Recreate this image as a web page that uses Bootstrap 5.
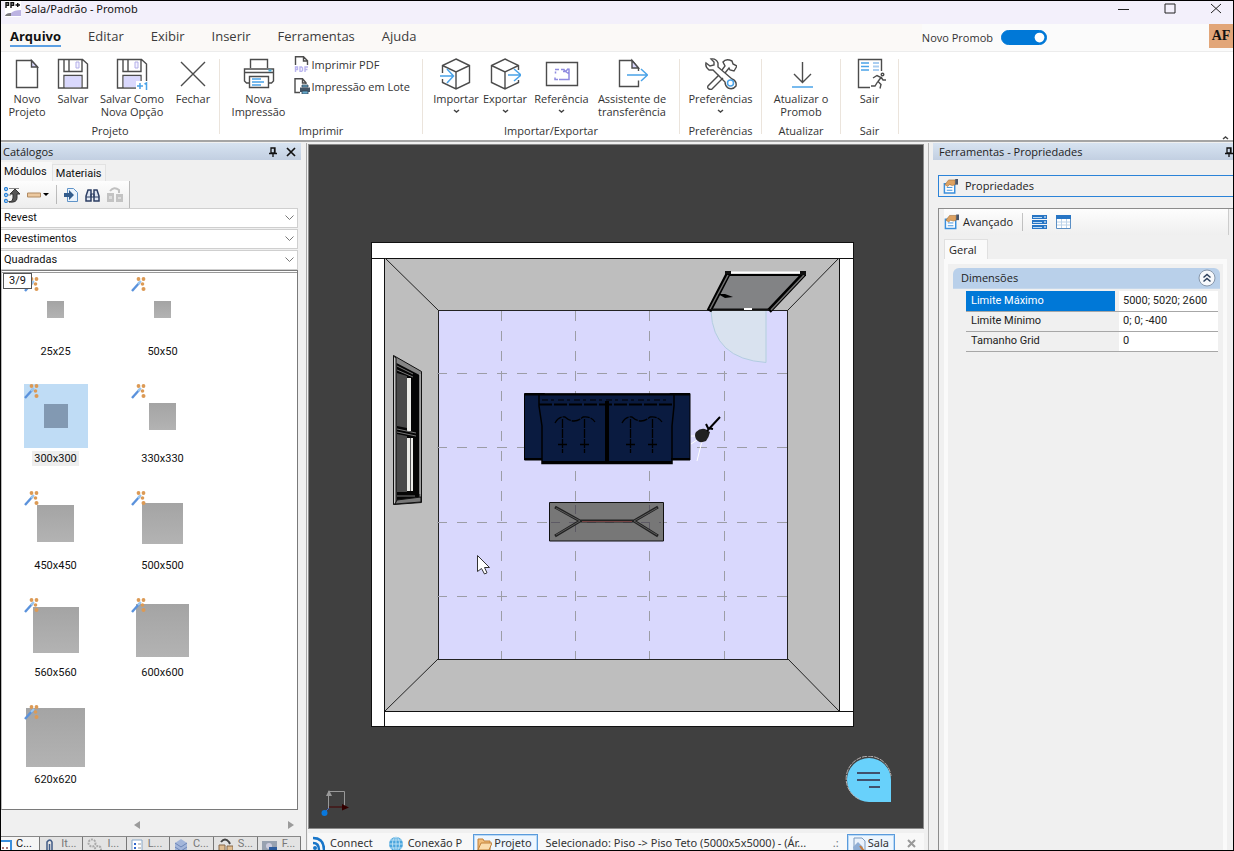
<!DOCTYPE html>
<html lang="pt-BR">
<head>
<meta charset="utf-8">
<meta name="viewport" content="width=device-width, initial-scale=1">
<title>Sala/Padrão - Promob</title>
<link rel="stylesheet" href="https://cdn.jsdelivr.net/npm/bootstrap@5.3.0/dist/css/bootstrap.min.css">
<script src="https://cdn.jsdelivr.net/npm/bootstrap@5.3.0/dist/js/bootstrap.bundle.min.js"></script>
<style>
  :root { --ui: "Open Sans", "Noto Sans", sans-serif; --noto: "Noto Sans", "Open Sans", sans-serif; --cls: Roboto, "Liberation Sans", sans-serif; }
  html, body { height: 100%; }
  body { font-family: var(--ui); font-size: 12px; line-height: 16px; color: #333; background: #f0f0f0; border: 1px solid #000; }
  button { color: inherit; }
  svg { display: block; flex: none; }
  .s { fill: none; stroke: #4c4c4c; stroke-width: 1.4; }
  .b { fill: none; stroke: #4aa3e8; stroke-width: 1.5; }
  .lv { fill: #d9d8fd; }

  .title-bar { height: 23px; background: #f3f0fb; color: #111; }
  .title-bar .caption { line-height: 16px; font-family: var(--noto); font-size: 11px; }
  .win-btns { gap: 34px; padding: 2px 11px 0 0; }
  .win-btns button { height: 12px; }
  .menu-bar { height: 28px; background: #fbf9f7; border-bottom: 1px solid #ececec; }
  .menu-tabs { padding-left: 9px; gap: 27px; }
  .menu-tabs a { font-size: 13px; line-height: 24px; color: #3b3b3b; text-decoration: none; height: 24px; }
  .menu-tabs a.active { font-weight: 700; color: #111; border-bottom: 2px solid #5b9fe3; height: 23px; }
  .menu-right { background: #fbfbfb; font-size: 11px; }
  .menu-right .form-switch { padding: 0; min-height: 0; margin: 0; gap: 8px; }
  .menu-right .form-check-input { width: 46px; height: 15px; margin: 0; float: none; background-color: #0078d7 !important; border-color: #0078d7; }
  .user-tag { width: 24px; height: 24px; margin-left: 162px; background: #e2a679; color: #111; font: 700 14px/23px "Liberation Serif", serif; text-align: center; }

  .ribbon { background: #fff; height: 90px; border-bottom: 2px solid #a5a5a5; font-size: 11px; line-height: 13px; padding-top: 7px; }
  .r-group { height: 75px; border-right: 1px solid #ebe4dc; }
  .r-tools { height: 65px; display: grid; justify-content: center; align-items: start; }
  .r-name { text-align: center; line-height: 14px; }
  .r-btn { border: 0; background: none; padding: 0; display: flex; flex-direction: column; align-items: center; line-height: 13px; white-space: nowrap; }
  .r-btn svg { margin-bottom: 2px; margin-top: -1px; }
  .r-btn .chev { margin: 4px 0 0; }
  .g-proj { width: 219px; } .g-proj .r-tools { grid-template-columns: 48px 44px 74px 48px; }
  .g-prn { width: 203px; } .g-prn .r-tools { grid-template-columns: 70px 125px; }
  .g-io { width: 257px; } .g-io .r-tools { grid-template-columns: 49px 49px 64px 77px; }
  .g-pref { width: 82px; } .g-upd { width: 79px; } .g-exit { width: 58px; }
  .r-line { border: 0; background: none; padding: 0; display: flex; align-items: center; gap: 2px; height: 22px; white-space: nowrap; }
  .r-list { margin-top: -6px; }

  .left-pane { width: 300px; font-family: var(--cls); font-size: 11px; color: #111; }
  .pane-head { height: 17px; line-height: 17px; background: linear-gradient(#d7e3f1, #c2cfe1); color: #222; font-family: var(--ui); font-size: 11px; padding: 0 4px 0 2px; }
  .pane-tabs { height: 19px; margin-top: 2px; }
  .pane-tabs button { border: 0; padding: 0 5px 0 3px; background: #f8f8f8; line-height: 17px; font-size: 11px; }
  .pane-tabs button + button { border: 1px solid #e2e2e2; border-bottom: 0; background: #f3f3f3; margin-top: 2px; padding: 0 3px; }
  .tool-strip { height: 27px; width: 129px; background: linear-gradient(#fdfdfd, #ededed); border-right: 1px solid #b9b9b9; padding-left: 3px; gap: 7px; }
  .tool-strip button, .mini { border: 0; background: none; padding: 0; }
  .ruler { gap: 2px; }
  .combo { height: 20px; padding: 0 4px 0 3px; font-size: 11px; line-height: 18px; border: 1px solid #cfcfcf; border-left: 0; border-radius: 0; color: #111;
    background: #fff url("data:image/svg+xml,%3Csvg xmlns='http://www.w3.org/2000/svg' viewBox='0 0 9 6'%3E%3Cpath fill='none' stroke='%23777' d='M.5.5l4 4 4-4'/%3E%3C/svg%3E") no-repeat right 3px center / 9px 6px; }
  .combos { gap: 1px; }
  .combos, .tile-box, .h-scroll { margin-right: 3px; }
  .tile-box { background: #fff; border: 1px solid #7a7a7a; border-left-color: #bbb; box-shadow: inset 0 2px 0 -1px #fff, inset 0 3px 0 -1px #999; height: 540px; position: relative; padding-top: 6px; }
  .tiles { display: grid; grid-template-columns: repeat(auto-fill, 107px); }
  .tile { height: 107px; border: 0; background: none; padding: 0; display: flex; flex-direction: column; align-items: center; }
  .thumb { width: 64px; height: 64px; margin: 0 0 3px; position: relative; display: flex; align-items: center; justify-content: center; }
  .thumb i { aspect-ratio: 1; background: linear-gradient(#a4a4a4, #b3b3b3); }
  .thumb svg { position: absolute; left: 0; top: 0; }
  .tile .cap { line-height: 15px; padding: 0 2px; font-size: 11px; }
  .tile.on .thumb { background: #bfdcf5; } .tile.on .thumb i { background: #8299b2; } .tile.on .cap { background: #eee; }
  .counter { position: absolute; left: 1px; top: 2px; border: 1px solid #555; background: #fff; line-height: 14px; padding: 0 5px; z-index: 1; font-size: 11px; }
  .h-scroll { height: 26px; padding: 6px 3px 0 132px; }
  .dock-tabs { border-top: 1px solid #888; }
  .dock-tabs button { border: 0; border-right: 1px solid #777; background: #e3e3e3; color: #777; width: 44px; padding: 0 4px; gap: 5px; line-height: 14px; font-size: 11px; }
  .dock-tabs svg { height: 14px; }
  .dock-tabs button.on { background: #f5f5f5; color: #111; width: 40px; padding-left: 0; gap: 4px; }

  .main-row { min-height: 0; padding-top: 1px; }
  .mid-pane { border-left: 1px solid #a8a8a8; border-right: 1px solid #b4b4b4; margin-left: 5px; padding: 1px 4px 0 1px; }
  .scene { background: #404040; height: 685px; border: 1px solid #8a8a8a; position: relative; }
  .scene svg.plan { width: 100%; height: 100%; }
  .chat { position: absolute; right: 30px; bottom: 24px; }
  .status { margin-top: 4px; background: #f8f8f8; color: #333; line-height: 17px; white-space: nowrap; font-family: var(--noto); font-size: 11px; padding-top: 1px; }
  .status button { border: 0; background: none; padding: 0; display: flex; gap: 5px; line-height: 17px; }
  .status svg { height: 16px; }
  .status .proj { margin-left: 11px; }
  .status .on { border: 1px solid #5a9bdc; border-bottom: 0; box-shadow: inset 0 0 0 1px #b9d9f6; background: #eef6fe; padding: 0 5px 0 3px; gap: 2px; line-height: 16px; }

  .right-pane { font-size: 11px; width: 300px; overflow: hidden; color: #222; }
  .right-pane .pane-head { padding: 0 0 0 6px; }
  .prop-btn { height: 24px; border: 1px solid #2b83d8; border-right: 0; margin: 15px 0 0 5px; background: #f1f1f1; padding: 0 4px; gap: 7px; line-height: 20px; text-align: left; }
  .prop-box { margin: 11px 0 0 5px; border: 1px solid #8c8c8c; border-width: 1px 0 0 1px; padding-left: 5px; flex: 1; }
  .prop-tools { height: 26px; background: linear-gradient(#fdfdfd, #efefef); gap: 9px; margin-right: 4px; border-right: 1px solid #ccc; }
  .geral { border: 1px solid #e0e0e0; border-bottom: 0; background: #fafafa; height: 20px; line-height: 19px; margin-top: 4px; padding: 0 10px 0 4px; }
  .geral-page { background: #fafafa; padding: 5px 4px 0; margin-right: 6px; }
  .sheet { background: #f0f0f0; padding: 4px 3px 0 5px; height: 620px; }
  .sec-head { height: 21px; line-height: 20px; background: #b9d0ea; border-radius: 6px 6px 0 0; padding: 0 4px 0 8px; border-bottom: 1px solid #c6d8ec; }
  .props { margin: 2px 0 0 13px; width: calc(100% - 15px); font-family: var(--cls); }
  .props th, .props td { height: 20px; padding: 0 0 0 5px; border-bottom: 1px solid #a7a7a7; font-weight: 400; line-height: 18px; }
  .props th { width: 153px; } .props td { background: #fff; padding-left: 4px; }
  .props tr.on th { background: linear-gradient(#0078d7, #0078d7) 0 0 / 149px 100% no-repeat; color: #fff; }
</style>
</head>
<body class="d-flex flex-column overflow-hidden">

<svg width="0" height="0" class="position-absolute" aria-hidden="true">
  <symbol id="wand" viewBox="0 0 15 15"><path d="M1 14 9 5" stroke="#5a92dc" stroke-width="2.4"/><path d="M7 7l3-3" stroke="#9cc8f0" stroke-width="2"/><g fill="#dc9a55"><circle cx="7.500" cy="2" r="1.900"/><circle cx="12.500" cy="2" r="1.900"/><circle cx="11.500" cy="7" r="1.800"/><circle cx="12.500" cy="12" r="2"/></g></symbol>
  <symbol id="pin" viewBox="0 0 8 10"><path d="M2 1h4v5H2zM5.500 1v5M0 6.500h8M4 7v3" fill="none" stroke="#111" stroke-width="1.300"/></symbol>
  <symbol id="chev" viewBox="0 0 7 5"><path d="M1 1l2.500 2L6 1" fill="none" stroke="#444" stroke-width="1.500"/></symbol>
  <symbol id="floppy" viewBox="0 0 32 32"><path class="s" d="M1.500 1.500h24l5 4.500v24h-29zM7 1.500v12h18v-12M7 30V17.500h18V30M12 2v11"/><path class="lv" d="M7.700 18.200h16.600v11H7.700z"/><path d="M19 4h3v6h-3z" fill="#f4f3ff" stroke="#b2aee8"/></symbol>
  <symbol id="cube" viewBox="0 0 32 32"><path class="s" d="M16 1l13.500 6.500v17L16 31 2.500 24.500v-17zM2.500 7.500 16 14l13.500-6.500M16 14v17"/></symbol>
  <symbol id="hand" viewBox="0 0 16 16"><path d="M1.500 5h11v10h-11z" fill="#fff" stroke="#3a8fdc" stroke-width="1.600"/><path d="M4 9h6M4 12h6" stroke="#3a8fdc"/><path d="M2 6l4-5h7v5l-3 1-3-1-2 2z" fill="#dda262" stroke="#9c6b35" stroke-width=".6"/><path d="M13 0h3v6h-3z" fill="#4a5568"/></symbol>
</svg>

<header>
  <div class="title-bar d-flex justify-content-between">
    <div class="d-flex">
      <svg width="16" height="16" viewBox="0 0 16 16" class="ms-1 me-1"><path fill="#fff" d="M0 0h16v16H0z"/><path d="M1 1v6M1 1.700h2.500v2.600H1M6 1v6M6 1.700h2.500v2.600H6M10.500 4H15M12.700 2v4" fill="none" stroke="#111" stroke-width="1.400"/><path d="M0 15q1-3 6-3 3-3 10-3v6z" fill="#bcb3e2"/><path d="M0 15q1-3 6-3v3z" fill="#777"/></svg>
      <span class="caption">Sala/Padrão - Promob</span>
    </div>
    <div class="d-flex win-btns">
      <button class="mini" aria-label="Minimizar"><svg width="12" height="12"><path d="M0 6.500h11" stroke="#222" /></svg></button>
      <button class="mini" aria-label="Maximizar"><svg width="12" height="12"><path d="M1 1h10v9H1z" fill="none" stroke="#222" /></svg></button>
      <button class="mini" aria-label="Fechar janela"><svg width="12" height="12"><path d="M1 1l10 9M11 1 1 10" stroke="#222" /></svg></button>
    </div>
  </div>

  <div class="menu-bar d-flex justify-content-between">
    <nav class="menu-tabs d-flex">
      <a href="#" class="active">Arquivo</a><a href="#">Editar</a><a href="#">Exibir</a><a href="#">Inserir</a><a href="#">Ferramentas</a><a href="#">Ajuda</a>
    </nav>
    <div class="menu-right d-flex">
      <div class="form-check form-switch d-flex align-items-center">
        <label for="novo">Novo Promob</label>
        <input class="form-check-input" type="checkbox" role="switch" id="novo" checked>
      </div>
      <div class="user-tag">AF</div>
    </div>
  </div>

  <div class="ribbon d-flex position-relative">
    <section class="r-group g-proj">
      <div class="r-tools">
        <button class="r-btn"><svg width="32" height="32"><path class="s" d="M5.500 2.500h15l6 6.500v20.500h-21z"/><path class="s" d="M20.500 2.500V9h6z" style="fill:#d9d8fd"/></svg><span>Novo<br>Projeto</span></button>
        <button class="r-btn"><svg width="32" height="32"><use href="#floppy"/></svg>Salvar</button>
        <button class="r-btn"><svg width="32" height="32"><use href="#floppy"/><path d="M20 23h12v9H20z" fill="#fff"/><path class="b" d="M21 28h6M24 25v6M28.500 26l2-1v7"/></svg><span>Salvar Como<br>Nova Opção</span></button>
        <button class="r-btn"><svg width="32" height="32"><path class="s" d="M4 4l24 24M28 4 4 28"/></svg>Fechar</button>
      </div>
      <div class="r-name">Projeto</div>
    </section>
    <section class="r-group g-prn">
      <div class="r-tools">
        <button class="r-btn"><svg width="32" height="32"><path class="s" d="M7.500 10V1.500h17V10M6.500 25H3.500L1.500 23V11h29v12l-2 2h-3M1.500 14.500h29M6.500 18.500h19v11h-19z"/><path class="b" d="M9 21h9M9 24h12M9 27h9"/><path d="M25.500 12.500h3" stroke="#4ad" stroke-width="2"/></svg><span>Nova<br>Impressão</span></button>
        <div class="r-list">
          <button class="r-line"><svg width="16" height="16"><path class="s" d="M1.500 9V.7h8l4 4V9M9.500 1v4h4"/><path d="M1.500 16v-5h2v2.500h-2M6 15.500v-4.500h1.500l1 1v2.500l-1 1zM11 16v-5h3M11 13.500h2.500" fill="none" stroke="#b8b3ef" stroke-width="1.400"/></svg>Imprimir PDF</button>
          <button class="r-line"><svg width="16" height="16"><path class="s" d="M6 14.500H1V.7h7.500l3.500 4V6M8.500 1v4H12"/><path d="M6 9.500h10v4.500H6z" fill="#456"/><path d="M8 7h6v2H8zM8 13h6v3H8z" fill="#6ac" stroke="#345" stroke-width=".8"/></svg>Impressão em Lote</button>
        </div>
      </div>
      <div class="r-name">Imprimir</div>
    </section>
    <section class="r-group g-io">
      <div class="r-tools">
        <button class="r-btn"><svg width="32" height="32"><use href="#cube"/><path d="M0 15h6v6H0z" fill="#fff"/><path class="b" d="M-1 18h14M7 11l6.500 7L7 25"/></svg>Importar<svg class="chev" width="7" height="5"><use href="#chev"/></svg></button>
        <button class="r-btn"><svg width="32" height="32"><use href="#cube"/><path d="M26 12h6v10h-6z" fill="#fff"/><path class="b" d="M19 17h13M25 11l7 6-7 6"/></svg>Exportar<svg class="chev" width="7" height="5"><use href="#chev"/></svg></button>
        <button class="r-btn"><svg width="34" height="32"><path class="s" d="M1.500 4.500h31v23h-31z"/><path d="M10 11.500h4m2 0h3l1 2h-2M24 10.500v11h-10m-4-2v2h3M10.500 13.500v2m13-5-3 3 3 2" fill="none" stroke="#8f8be0" stroke-width="1.500"/></svg>Referência<svg class="chev" width="7" height="5"><use href="#chev"/></svg></button>
        <button class="r-btn"><svg width="32" height="32"><path class="s" d="M22.500 13V10L16 2.500H3.500v26h19v-6"/><path class="s" d="M16 2.500V10h6.500z" style="fill:#d9d8fd"/><path class="b" d="M11 17h20M25 11l6.500 6-6.500 6"/></svg><span>Assistente de<br>transferência</span></button>
      </div>
      <div class="r-name">Importar/Exportar</div>
    </section>
    <section class="r-group g-pref">
      <div class="r-tools">
        <button class="r-btn"><svg width="32" height="32"><path class="s" d="M6 1q5-1 7 4v4L27 21q5 2 4 7-3 4-8 2-3-2-3-6L8 12H4Q0 9 1 5l4 3 4-1V4z"/><path class="s" d="M17 12l3-4-2-4q3-4 9-1l1 3 4 2-3 5-4-1-1-2-4 5M14 17 3 28q-1 2 1 3t3 0l11-11"/><circle class="b" cx="25.500" cy="25" r="3"/></svg>Preferências<svg class="chev" width="7" height="5"><use href="#chev"/></svg></button>
      </div>
      <div class="r-name">Preferências</div>
    </section>
    <section class="r-group g-upd">
      <div class="r-tools">
        <button class="r-btn"><svg width="32" height="32"><path class="s" d="M17.500 4v20M9 16l8.500 8.500L26 16"/><path class="b" d="M7 29h21"/></svg><span>Atualizar o<br>Promob</span></button>
      </div>
      <div class="r-name">Atualizar</div>
    </section>
    <section class="r-group g-exit">
      <div class="r-tools">
        <button class="r-btn"><svg width="32" height="32"><path class="s" d="M27.500 13V1.500h-23v28H16"/><path class="b" d="M7 5h8M7 8.500h8M7 12h8" stroke-width="2"/><path d="M19 5h6M19 8.500h6M19 12h6" stroke="#a9cdf0" stroke-width="2"/><path class="s" d="M19 20l4-2.500 4 2-3 4 3 3-1 4M23.500 24l-2.500 4h-4M27 19l2 3h3"/><circle class="s" cx="28.500" cy="16.500" r="1.300"/></svg>Sair</button>
      </div>
      <div class="r-name">Sair</div>
    </section>
    <button class="mini position-absolute bottom-0 end-0 me-1" aria-label="Recolher faixa"><svg width="7" height="5"><path d="M1 4l2.500-2L6 4" fill="none" stroke="#444" stroke-width="1.500"/></svg></button>
  </div>
</header>

<main class="main-row d-flex flex-grow-1">
  <aside class="left-pane flex-shrink-0">
    <div class="pane-head d-flex align-items-center">
      <span class="me-auto">Catálogos</span>
      <button class="mini me-2" aria-label="Fixar"><svg width="8" height="10"><use href="#pin"/></svg></button>
      <button class="mini" aria-label="Fechar painel"><svg width="12" height="10"><path d="M2 1l8 8M10 1 2 9" stroke="#111" stroke-width="1.700"/></svg></button>
    </div>
    <div class="pane-tabs d-flex"><button>Módulos</button><button>Materiais</button></div>
    <div class="tool-strip d-flex align-items-center">
      <button aria-label="Subir nível"><svg width="16" height="16"><g fill="#fff" stroke="#2b83d8" stroke-width="1.300"><circle cx="2" cy="2" r="1.500"/><circle cx="2" cy="8" r="1.500"/><circle cx="2" cy="14" r="1.500"/></g><path d="M5 1.500h10M3 14.500h4M4 8h3" stroke="#888"/><path d="M5 15q4 0 4-4V7H6l5-5 5 5h-3v4q0 5-8 4z" fill="#555" stroke="#333"/></svg></button>
      <button class="ruler d-flex align-items-center" aria-label="Régua"><svg width="14" height="6"><path d="M.5 1h13v4H.5z" fill="#ecc9a0" stroke="#b08a62"/></svg><svg width="6" height="4"><path d="M0 0h6L3 3z"/></svg></button>
      <span class="vr mt-1 mb-1"></span>
      <button aria-label="Inserir"><svg width="14" height="14"><path d="M3.500.5h6l4 4v9h-10z" fill="#eaf3fc" stroke="#5f93c8"/><path d="M0 5h5V2l5 5-5 5V9H0z" fill="#335c8c"/></svg></button>
      <button aria-label="Localizar"><svg width="15" height="14"><path d="M1 13V8l2-6h3v11zM14 13V8l-2-6H9v11z" fill="#dfe6f2" stroke="#2d3e63" stroke-width="1.500"/><path d="M6 6h3v3H6zM1 9h5M9 9h5" stroke="#2d3e63" fill="none"/></svg></button>
      <button aria-label="Substituir" disabled><svg width="16" height="16"><path d="M0 6h7v9H0zM9 7h7v8H9z" fill="#c3c3c3"/><path d="M2 9h3v3H2zM11 10h3v2h-3z" fill="#ddd"/><path d="M3 4q4-5 9-1v3" fill="none" stroke="#c0c0c0" stroke-width="2"/></svg></button>
    </div>
    <div class="combos d-flex flex-column">
      <select class="combo form-select" aria-label="Catálogo"><option>Revest</option></select>
      <select class="combo form-select" aria-label="Grupo"><option>Revestimentos</option></select>
      <select class="combo form-select" aria-label="Tipo"><option>Quadradas</option></select>
    </div>
    <div class="tile-box">
      <div class="counter">3/9</div>
      <div class="tiles">
        <button class="tile"><span class="thumb"><svg width="15" height="15"><use href="#wand"/></svg><i style="width:17px"></i></span><span class="cap">25x25</span></button>
        <button class="tile"><span class="thumb"><svg width="15" height="15"><use href="#wand"/></svg><i style="width:17px"></i></span><span class="cap">50x50</span></button>
        <button class="tile on"><span class="thumb"><svg width="15" height="15"><use href="#wand"/></svg><i style="width:24px"></i></span><span class="cap">300x300</span></button>
        <button class="tile"><span class="thumb"><svg width="15" height="15"><use href="#wand"/></svg><i style="width:27px"></i></span><span class="cap">330x330</span></button>
        <button class="tile"><span class="thumb"><svg width="15" height="15"><use href="#wand"/></svg><i style="width:37px"></i></span><span class="cap">450x450</span></button>
        <button class="tile"><span class="thumb"><svg width="15" height="15"><use href="#wand"/></svg><i style="width:41px"></i></span><span class="cap">500x500</span></button>
        <button class="tile"><span class="thumb"><svg width="15" height="15"><use href="#wand"/></svg><i style="width:46px"></i></span><span class="cap">560x560</span></button>
        <button class="tile"><span class="thumb"><svg width="15" height="15"><use href="#wand"/></svg><i style="width:53px"></i></span><span class="cap">600x600</span></button>
        <button class="tile"><span class="thumb"><svg width="15" height="15"><use href="#wand"/></svg><i style="width:59px"></i></span><span class="cap">620x620</span></button>
      </div>
    </div>
    <div class="h-scroll d-flex justify-content-between">
      <svg width="8" height="18"><path d="M7 5v8L1 9z" fill="#9b9b9b"/></svg><svg width="8" height="18"><path d="M1 5v8l6-4z" fill="#9b9b9b"/></svg>
    </div>
    <div class="dock-tabs d-flex">
      <button class="on d-flex"><svg width="11" height="16"><path d="M-2 4h12v12H-2z" fill="#fff" stroke="#3a8fdc" stroke-width="2"/><path d="M1 11h2M5 11h2" stroke="#a77" stroke-width="2"/></svg>C...</button>
      <button class="d-flex"><svg width="12" height="16"><path d="M3 16V5q3-4 5 0v11M5.500 7v9" fill="none" stroke="#405b86" stroke-width="1.500"/></svg>It...</button>
      <button class="d-flex"><svg width="15" height="16"><circle cx="5" cy="6" r="3.500" fill="none" stroke="#aaa" stroke-width="2" stroke-dasharray="2 1"/><circle cx="11" cy="12" r="3" fill="none" stroke="#aaa" stroke-width="2" stroke-dasharray="2 1"/></svg>I...</button>
      <button class="d-flex"><svg width="12" height="16"><path d="M1 3h10v14H1z" fill="#fff" stroke="#89a8c9"/><path d="M3 7h2M3 11h2" stroke="#36c" stroke-width="2"/><path d="M7 7h3M7 11h3" stroke="#999"/></svg>L...</button>
      <button class="d-flex"><svg width="14" height="16"><path d="M7 2l6 4v7l-6 4-6-4V6z" fill="#a3b6da"/><path d="M1 6l6 4 6-4M1 10l6 4 6-4" stroke="#6e87b8" fill="none"/></svg>C...</button>
      <button class="d-flex"><svg width="15" height="16"><path d="M1 8h6v8H1zM9 9h6v7H9z" fill="#e0bd91" stroke="#86684a"/><path d="M3 5q4-5 8 0l1 2" fill="none" stroke="#444" stroke-width="2"/></svg>S...</button>
      <button class="d-flex"><svg width="15" height="16"><path d="M0 4h15v9H0z" fill="#98a2b0"/><circle cx="7" cy="9" r="3" fill="#ccd"/><path d="M7 10h8v6H7z" fill="#2d5c9d"/></svg>F...</button>
    </div>
  </aside>

  <section class="mid-pane flex-grow-1 d-flex flex-column overflow-hidden">
    <div class="scene flex-shrink-0">
      <svg class="plan" viewBox="309 145 614 683" role="img" aria-label="Planta da sala">
        <g shape-rendering="crispEdges" stroke="#111" fill="#fff">
          <path d="M371.500 242.500h482v484h-482z"/><path d="M371 258.500h483M385 711.500h469M384.500 258v468M839.500 258v454" fill="none"/>
          <path d="M384.500 258.500h455v453h-455z" fill="#bebebe"/>
          <path d="M438.500 310.500h349v349h-349z" fill="#d9d8fd" stroke="#222"/>
        </g>
        <path d="M385 258l53 52M839 258l-51 52M385 711l53-52M839 711l-51-52" stroke="#222" fill="none"/>
        <g stroke="#9c9da6" stroke-dasharray="10 10" shape-rendering="crispEdges"><path d="M501.500 311v348M575.500 311v348M649.500 311v348M724.500 311v348"/><path d="M437 373.500h350M437 447.500h350M437 522.500h350M437 596.500h350"/></g>
        <!-- window -->
        <path d="M393.500 355.500l28 16v131l-28 2z" fill="#858585" stroke="#111"/><path d="M396.500 363l23 12v122l-23 4z" fill="#050505"/>
        <path d="M393.500 356v148h2.500V358z" fill="#c8c8c8" stroke="#111"/>
        <path d="M397 373l10 3v52l-10-2zM397 434l10 2v56h-10z" fill="#4a4a4a"/>
        <path d="M407 378h4v53h-4zM407 438h6v53h-6z" fill="#ecece8"/><path d="M410.500 438v53" stroke="#555"/><path d="M420 374v120" stroke="#bbb"/><path d="M397 366l16 8M397 370l16 7M397 429l19 4M397 432l19 4M397 496h18" stroke="#777"/>
        <path d="M397 500l24-3v5l-26 2z" fill="#777" stroke="#111"/>
        <!-- door -->
        <path d="M711 311h55.500v51Q713 359 711 311z" fill="#d9e2ef"/><path d="M711 311q2 48 55 51.500V311" fill="none" stroke="#b3cde0"/>
        <path d="M727 275l76 0-33 34h-60z" fill="#828385" stroke="#111"/>
        <path d="M728 272.500h75" stroke="#fff" stroke-width="2"/><path d="M726 275h80" stroke="#000" stroke-width="2"/>
        <path d="M728 274l-19 37M804 274l-35 37" stroke="#000" stroke-width="5"/><path d="M728 275l-18 34M804 275l-33 35" stroke="#707070" stroke-width="1.500"/>
        <path d="M725 271h6v3h-6zM800 271h6v4h-6z" fill="#111"/><path d="M709 309.500h60" stroke="#111"/><path d="M744 309h8" stroke="#fff" stroke-width="2"/>
        <path d="M718 294h7l8 3-8 1z" fill="#000"/>
        <!-- sofa -->
        <g stroke="#000" fill="#0a1b40"><path d="M524.500 393.500h20v66.500h-20zM670 393.500h20v66.500h-20z"/><path d="M539 394h135v12l-2 20v37.500H542V426l-3-20z" stroke-width="1.500"/></g>
        <g stroke="#000" fill="none"><path d="M607 401v62" stroke-width="4"/><path d="M525 394.500h165M542 462h130M524 459h18M671 459h19" stroke-width="2"/><path d="M539 404.500h134" stroke-width="2" stroke-dasharray="13 2"/><path d="M542 400h128" stroke-dasharray="6 3 3 4"/>
        <path d="M555 423q4-7 10-6 9 8 18 0 8-1 12 5M562.500 419v34M584.500 419v34M558 444.500h9M580 444.500h9" stroke-width="1.300" stroke-dasharray="9 1"/><path d="M622 423q4-7 10-6 9 8 18 0 8-1 12 5M630.500 419v34M652.500 419v34M626 444.500h9M648 444.500h9" stroke-width="1.300" stroke-dasharray="9 1"/></g>
        <!-- lamp -->
        <path d="M691 436h5M691 444l6-4M702 441l-5 20" stroke="#fff"/><path d="M696 432q4-4 9-3l5 3q-1 5-4 9-7 3-10-2-2-4 0-7z" fill="#222"/><path d="M707 431l13-14M706 424l2 4 5 1" stroke="#000" stroke-width="2" fill="none"/>
        <!-- table -->
        <path d="M549.500 502.500h114v38.500h-114z" fill="#777" stroke="#111"/><path d="M575.500 505v34M649.500 505v34M551 522.500h110" stroke="#5d5a64" stroke-dasharray="9 9"/>
        <path d="M555 507l25 14M555 536l25-15M658 507l-24 14M658 536l-24-15M580 521h54" stroke="#222" stroke-width="3"/><path d="M556 508l24 13M657 508l-23 13M556 535l24-14M657 535l-23-14" stroke="#666" stroke-width=".8"/><path d="M582 521.500h50" stroke="#764444"/>
        <!-- axis marker -->
        <path d="M328.500 808v-16.500h16V807" fill="none" stroke="#999"/><path d="M326 796l3-6 3 6z" fill="#999"/><path d="M329 807h15" stroke="#400"/><path d="M342 804l7 3.500-7 3z" fill="#300"/><path d="M324 813l5-5" stroke="#46c"/><circle cx="324.500" cy="813" r="3" fill="#0878dd"/>
        <!-- pointer -->
        <path d="M477.500 555.500v16l4-3 3 5.500 2.500-1.200-2.500-5.300h5z" fill="#fff" stroke="#333"/>
      </svg>
      <button class="mini chat" aria-label="Ajuda on-line"><svg width="48" height="48"><path d="M24 2a22 22 0 0 0 0 44h22V24A22 22 0 0 0 24 2z" fill="#68d1fb"/><path d="M14 43A22.500 22.500 0 1 1 46 20" fill="none" stroke="#b9b3b3" stroke-dasharray="5 1"/><path d="M12 17h23M12 24h23M24 31h11" stroke="#40506c" stroke-width="2"/></svg></button>
    </div>
    <div class="status d-flex align-items-start">
      <button class="ms-1"><svg width="13" height="18"><circle cx="3" cy="14" r="2" fill="#1976c9"/><path d="M1 9q6 0 6 7M1 4q11 0 11 12" fill="none" stroke="#1976c9" stroke-width="2.500"/></svg><span>Connect</span></button>
      <button class="ms-3"><svg width="14" height="18"><circle cx="7" cy="10" r="7" fill="#4aa5dd"/><path d="M0 10h14M7 3v14M1 6h12M1 14h12" stroke="#b9e0f5"/><ellipse cx="7" cy="10" rx="3.500" ry="7" fill="none" stroke="#b9e0f5"/></svg><span>Conexão P</span></button>
      <button class="on proj"><svg width="15" height="18"><path d="M1 15V4h5l1 2h6v9z" fill="#f1bd7a" stroke="#c1803b"/><path d="M1 15l3-7h11l-3 7z" fill="#fbdcae" stroke="#c1803b"/></svg><span>Projeto</span></button>
      <span class="ms-2 me-auto">Selecionado: Piso -&gt; Piso Teto (5000x5x5000) - (Ár...</span>
      <span class="me-2 text-secondary">.:</span>
      <button class="on"><svg width="15" height="18"><path d="M3 3h8l3 3v10H3z" fill="#eaf2fb" stroke="#7a99bd"/><path d="M2 12l5-5 5 5v4H3z" fill="#8faed5"/><path d="M9 11l4 5" stroke="#c77b3b" stroke-width="2"/></svg><span>Sala</span></button>
      <button class="mx-2 ps-1" aria-label="Fechar aba"><svg width="9" height="16"><path d="M1 6l7 7M8 6l-7 7" stroke="#999" stroke-width="2"/></svg></button>
    </div>
  </section>

  <aside class="right-pane flex-shrink-0 d-flex flex-column ms-1">
    <div class="pane-head d-flex align-items-center justify-content-between"><span>Ferramentas - Propriedades</span><svg width="8" height="10"><use href="#pin"/></svg></div>
    <button class="prop-btn d-flex align-items-center"><svg width="15" height="15"><use href="#hand"/></svg>Propriedades</button>
    <div class="prop-box">
      <div class="prop-tools d-flex align-items-center">
        <button class="mini d-flex gap-1"><svg width="15" height="16"><use href="#hand"/></svg>Avançado</button>
        <span class="vr my-1"></span>
        <button class="mini" aria-label="Categorias"><svg width="15" height="14"><path d="M0 0h15v4H0zM0 5h15v4H0zM0 10h15v4H0z" fill="#2775c4"/><path d="M1 2.500h9M1 7.500h9M1 12.500h9" stroke="#b9daf7"/><path d="M12 2h2M12 7h2M12 12h2" stroke="#fff"/></svg></button>
        <button class="mini" aria-label="Tabela"><svg width="15" height="14"><path d="M.5.500h14v13H.5z" fill="#fff" stroke="#5b8fc4"/><path d="M0 0h15v4H0z" fill="#2775c4"/><path d="M5.500 4v9M10.500 4v9M1 7h13M1 10h13" stroke="#bcd3e9"/></svg></button>
      </div>
      <button class="geral">Geral</button>
      <div class="geral-page">
        <div class="sheet">
          <div class="sec-head d-flex align-items-center justify-content-between"><span>Dimensões</span>
            <button class="mini" aria-label="Recolher"><svg width="18" height="18"><circle cx="9" cy="9" r="8" fill="#f7f9fc" stroke="#8797ab"/><path d="M5.500 8.500 9 5.500l3.500 3M5.500 12.500 9 9.500l3.500 3" fill="none" stroke="#2d405c" stroke-width="1.500"/></svg></button></div>
          <table class="props">
            <tr class="on"><th scope="row">Limite Máximo</th><td>5000; 5020; 2600</td></tr>
            <tr><th scope="row">Limite Mínimo</th><td>0; 0; -400</td></tr>
            <tr><th scope="row">Tamanho Grid</th><td>0</td></tr>
          </table>
        </div>
      </div>
    </div>
  </aside>
</main>
</body>
</html>
